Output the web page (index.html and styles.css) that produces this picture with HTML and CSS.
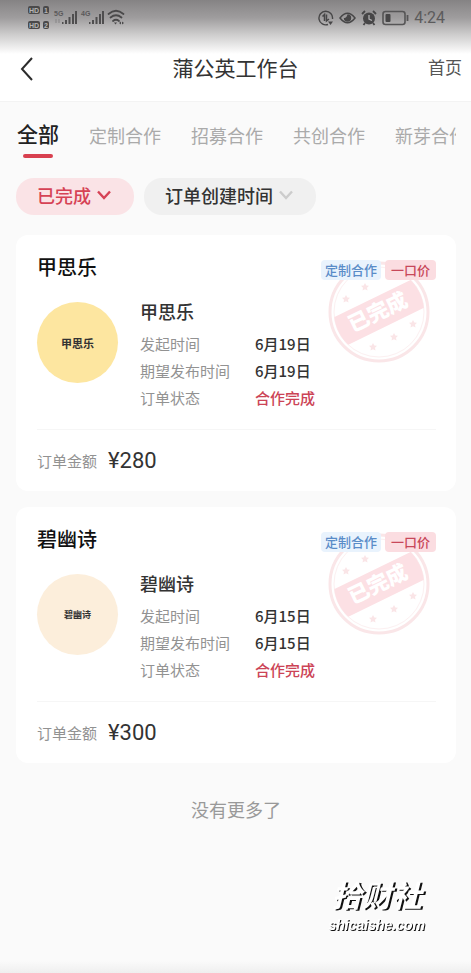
FILE: index.html
```html
<!DOCTYPE html>
<html lang="zh-CN">
<head>
<meta charset="utf-8">
<meta name="viewport" content="width=device-width, initial-scale=1">
<title>蒲公英工作台</title>
<link rel="stylesheet" href="styles.css">
</head>
<body>
<svg width="0" height="0" class="defs" aria-hidden="true">
  <defs>
    <path id="star" d="M0-4L1.300-1.600L4-1.200L2 .8L2.500 3.600L0 2.300L-2.500 3.600L-2 .8L-4-1.200L-1.300-1.600Z"/>
    <clipPath id="disc"><circle cx="51" cy="51" r="45"/></clipPath>
    <g id="stamp">
      <circle cx="51" cy="51" r="49" fill="none" stroke="#fae6e8" stroke-width="3"/>
      <circle cx="51" cy="51" r="45" fill="none" stroke="#fcf0f1" stroke-width="1"/>
      <g clip-path="url(#disc)"><rect x="0" y="36" width="102" height="31" fill="#fce0e4" transform="rotate(-26 51 51)"/></g>
      <g fill="#fae5e7">
        <use href="#star" x="18" y="38"/>
        <use href="#star" x="37" y="26"/>
        <use href="#star" x="66" y="76"/>
        <use href="#star" x="85" y="63"/>
        <use href="#star" x="45" y="86"/>
      </g>
      <text x="50" y="58" text-anchor="middle" class="stamp-text" transform="rotate(-26 51 51)">已完成</text>
    </g>
  </defs>
</svg>

<header class="header">
  <div class="status">
    <svg class="status-left" width="98" height="26" viewBox="0 0 98 26" aria-hidden="true">
      <g fill="#4a494a">
        <rect x="0" y="1" width="12" height="8" rx="2"/><rect x="15" y="1" width="6" height="8" rx="2"/>
        <rect x="0" y="16" width="12" height="8" rx="2"/><rect x="15" y="16" width="6" height="8" rx="2"/>
      </g>
      <g class="badge-text"><text x="1" y="8">HD</text><text x="16" y="8">1</text><text x="1" y="23">HD</text><text x="16" y="23">2</text></g>
      <g class="net-text"><text x="26" y="11">5G</text><text x="53" y="11">4G</text></g>
      <g fill="#4f4e4f">
        <path d="M34 17h1.500v2H34zM37 15h2v4h-2zM40.500 12h2v7h-2zM44 9h2v10h-2zM47 6h2v13h-2z"/>
        <path d="M61 17h1.500v2H61zM64 15h2v4h-2zM67.500 12h2v7h-2zM71 9h2v10h-2zM74 6h2v13h-2z"/>
      </g>
      <path d="M28 14v4M31 14v4" stroke="#858485" fill="none"/>
      <path d="M80.500 9Q88 2.500 95.500 9M82.500 12.500Q88 8 93.500 12.500M85 16Q88 13.500 91 16" stroke="#4a494a" stroke-width="1.800" fill="none" stroke-linecap="round"/>
      <path d="M86 17.500h3l-1.500 2zM91 18l2-1.500v3zM94 16.500l2 1.500-2 1.500z" fill="#4a494a"/>
    </svg>
    <div class="status-right">
      <svg width="16" height="16" viewBox="0 0 16 16" aria-hidden="true"><path d="M14.500 9A6.800 6.800 0 1 0 10 14.500" fill="none" stroke="#474647" stroke-width="1.400"/><path d="M4.500 6.500L6.500 4.500V11M8.500 4.500V11L11 9" fill="none" stroke="#474647" stroke-width="1.500"/><path d="M10 11.500h5L12.500 15z" fill="#474647"/></svg>
      <svg width="17" height="14" viewBox="0 0 17 14" aria-hidden="true"><path d="M1 7Q8.500-2.500 16 7Q8.500 16.500 1 7Z" fill="none" stroke="#474647" stroke-width="1.500"/><path d="M8.500 3.300A3.700 3.700 0 1 1 4.800 7Q7.500 7.500 8.500 3.300Z" fill="#474647"/></svg>
      <svg width="16" height="16" viewBox="0 0 16 16" aria-hidden="true"><circle cx="8" cy="8.500" r="6" fill="#474647"/><path d="M1 4L4 1M15 4L12 1M4 13l-1.500 2M12 13l1.500 2" stroke="#474647" stroke-width="1.800"/><path d="M8 5v4l3 1.500" fill="none" stroke="#b0afb0" stroke-width="1.300"/></svg>
      <svg width="27" height="16" viewBox="0 0 27 16" aria-hidden="true"><rect x="1" y="1.500" width="22" height="13" rx="2.500" fill="none" stroke="#565556" stroke-width="1.600"/><rect x="3.500" y="4" width="5" height="8" rx="1" fill="#474647"/><path d="M25.500 5v6" stroke="#565556" stroke-width="1.800"/></svg>
      <time class="clock">4:24</time>
    </div>
  </div>
  <div class="navbar">
    <button class="back" type="button" aria-label="返回"><svg width="14" height="26" viewBox="0 0 14 26"><path d="M12 2L2 13L12 24" fill="none" stroke="#2c2c2c" stroke-width="2"/></svg></button>
    <h1 class="title">蒲公英工作台</h1>
    <a class="home" href="#">首页</a>
  </div>
</header>

<main class="main">
  <nav class="tabs">
    <button class="tab tab-active" type="button">全部</button>
    <button class="tab" type="button">定制合作</button>
    <button class="tab" type="button">招募合作</button>
    <button class="tab" type="button">共创合作</button>
    <button class="tab" type="button">新芽合作</button>
  </nav>

  <div class="filters">
    <button class="filter filter-active" type="button">已完成<svg width="14" height="10" viewBox="0 0 14 10" aria-hidden="true"><path d="M1 1.500L7 8L13 1.500" fill="none" stroke="currentColor" stroke-width="2.400"/></svg></button>
    <button class="filter" type="button">订单创建时间<svg class="muted" width="14" height="10" viewBox="0 0 14 10" aria-hidden="true"><path d="M1 1.500L7 8L13 1.500" fill="none" stroke="currentColor" stroke-width="2.400"/></svg></button>
  </div>

  <article class="card">
    <svg class="stamp" width="102" height="102" viewBox="0 0 102 102"><use href="#stamp"/></svg>
    <div class="card-head">
      <h2 class="card-title">甲思乐</h2>
      <div class="tags"><span class="tag tag-blue">定制合作</span><span class="tag tag-red">一口价</span></div>
    </div>
    <div class="card-body">
      <div class="avatar avatar-yellow">甲思乐</div>
      <div class="info">
        <h3 class="name">甲思乐</h3>
        <dl class="facts">
          <dt>发起时间</dt><dd>6月19日</dd>
          <dt>期望发布时间</dt><dd>6月19日</dd>
          <dt>订单状态</dt><dd class="done">合作完成</dd>
        </dl>
      </div>
    </div>
    <div class="card-foot"><span class="label">订单金额</span><span class="price">¥280</span></div>
  </article>

  <article class="card">
    <svg class="stamp" width="102" height="102" viewBox="0 0 102 102"><use href="#stamp"/></svg>
    <div class="card-head">
      <h2 class="card-title">碧幽诗</h2>
      <div class="tags"><span class="tag tag-blue">定制合作</span><span class="tag tag-red">一口价</span></div>
    </div>
    <div class="card-body">
      <div class="avatar avatar-cream">碧幽诗</div>
      <div class="info">
        <h3 class="name">碧幽诗</h3>
        <dl class="facts">
          <dt>发起时间</dt><dd>6月15日</dd>
          <dt>期望发布时间</dt><dd>6月15日</dd>
          <dt>订单状态</dt><dd class="done">合作完成</dd>
        </dl>
      </div>
    </div>
    <div class="card-foot"><span class="label">订单金额</span><span class="price">¥300</span></div>
  </article>

  <p class="end">没有更多了</p>
</main>

<div class="watermark">
  <div class="mark-name">拾财社</div>
  <div class="mark-url">shicaishe.com</div>
</div>
</body>
</html>
```
FILE: styles.css
```css
* {
  box-sizing: border-box;
}

body {
  margin: 0;
  min-height: 100vh;
  background: linear-gradient(to top, #efefef 0, #fafafa 12px);
  color: #333;
  font-family: "Noto Sans CJK SC", sans-serif;
  overflow-x: hidden;
}

h1, h2, h3, p, dl, dd {
  margin: 0;
}

button {
  padding: 0;
  border: 0;
  background: none;
  font-family: inherit;
}

svg {
  display: block;
  flex: none;
}

.defs {
  position: absolute;
}

.header {
  border-bottom: 1px solid #f3f3f3;
  background: linear-gradient(#858384 0, #9f9d9e 18px, #cccbcb 34px, #fff 54px);
}

.status {
  display: flex;
  justify-content: space-between;
  height: 36px;
  padding: 5px 26px 0 28px;
}

.badge-text {
  fill: #b5b4b5;
  font: bold 7px "Liberation Sans", sans-serif;
}

.net-text {
  fill: #5a595a;
  font: bold 7px "Liberation Sans", sans-serif;
}

.status-right {
  display: flex;
  align-items: center;
  gap: 5px;
  height: 26px;
}

.clock {
  color: #5c5b5c;
  font: 16px/20px Roboto, sans-serif;
}

.navbar {
  display: grid;
  grid-template-columns: 1fr auto 1fr;
  align-items: center;
  height: 65px;
  padding: 0 9px;
}

.back {
  justify-self: start;
  padding-left: 11px;
}

.title {
  padding-bottom: 4px;
  color: #333;
  font-size: 21px;
  font-weight: 400;
  line-height: 32px;
}

.home {
  justify-self: end;
  padding-bottom: 4px;
  color: #555;
  font-size: 17px;
  line-height: 24px;
  text-decoration: none;
}

.main {
  padding: 16px 15px 0 16px;
}

.tabs {
  display: flex;
  align-items: flex-start;
  gap: 30px;
  padding-left: 1px;
  overflow: hidden;
}

.tab {
  flex: none;
  padding: 3px 0 9px;
  color: #aaa;
  font-size: 18px;
  line-height: 28px;
}

.tab-active {
  display: flex;
  flex-direction: column;
  align-items: center;
  gap: 7px;
  padding: 1px 0 0;
  color: #222;
  font-size: 21px;
  font-weight: 500;
}

.tab-active::after {
  width: 30px;
  height: 4px;
  border-radius: 2px;
  background: #d8404f;
  content: "";
}

.filters {
  display: flex;
  gap: 10px;
  padding: 20px 0;
}

.filter {
  display: flex;
  align-items: center;
  gap: 6px;
  height: 37px;
  padding: 0 23px 3px 21px;
  border-radius: 18px;
  background: #f0f0f0;
  color: #333;
  font-size: 18px;
  font-weight: 500;
  line-height: 28px;
}

.filter-active {
  background: #fae3e6;
  color: #d64255;
}

.muted {
  color: #ccc;
}

.card {
  position: relative;
  margin-bottom: 16px;
  padding: 16px 20px 0 21px;
  border-radius: 12px;
  background: #fff;
}

.stamp {
  position: absolute;
  top: 26px;
  right: 26px;
}

.stamp-text {
  fill: #fff;
  font-size: 21px;
  font-weight: 900;
}

.card-head {
  position: relative;
  display: flex;
  align-items: center;
  justify-content: space-between;
}

.card-title {
  color: #111;
  font-size: 20px;
  font-weight: 500;
  line-height: 32px;
}

.tags {
  display: flex;
  gap: 4px;
  padding-top: 5px;
}

.tag {
  padding: 0 4px;
  border-radius: 4px;
  font-size: 13px;
  font-weight: 500;
  line-height: 20px;
}

.tag-blue {
  background: #e9f3fd;
  color: #5a8cc8;
}

.tag-red {
  padding: 0 6px;
  background: #fbdde1;
  color: #c8485a;
}

.card-body {
  display: flex;
  gap: 22px;
  padding: 14px 0 18px;
  border-bottom: 1px solid #f6f6f6;
}

.avatar {
  display: flex;
  flex: none;
  align-items: center;
  justify-content: center;
  width: 81px;
  height: 81px;
  margin-top: 5px;
  border-radius: 50%;
  color: #333;
  font-weight: 700;
  line-height: 16px;
}

.avatar-yellow {
  background: #fde6a0;
  font-size: 11px;
}

.avatar-cream {
  background: #fceedb;
  font-size: 9px;
}

.name {
  padding-bottom: 5px;
  font-size: 18px;
  font-weight: 500;
  line-height: 28px;
}

.facts {
  display: grid;
  grid-template-columns: auto auto;
  column-gap: 25px;
  font-size: 15px;
  line-height: 27px;
}

.facts dt,
.label {
  color: #929292;
}

.facts dd {
  font-weight: 500;
}

.facts .done {
  color: #cc4456;
}

.card-foot {
  display: flex;
  align-items: center;
  gap: 11px;
  height: 61px;
}

.label {
  font-size: 15px;
}

.price {
  font: 22px/32px Roboto, sans-serif;
}

.end {
  padding: 16px 0;
  color: #999;
  font-size: 18px;
  line-height: 28px;
  text-align: center;
}

.watermark {
  position: fixed;
  right: 46px;
  bottom: 40px;
  color: #fff;
  font-style: italic;
  font-weight: 700;
  text-align: center;
  text-shadow: 1px 1px 0 #111;
}

.mark-name {
  font-size: 30px;
  line-height: 46px;
  text-shadow: 2px 1px 0 #111;
}

.mark-url {
  font-family: "Liberation Sans", sans-serif;
  font-size: 14px;
  line-height: 16px;
}
```
